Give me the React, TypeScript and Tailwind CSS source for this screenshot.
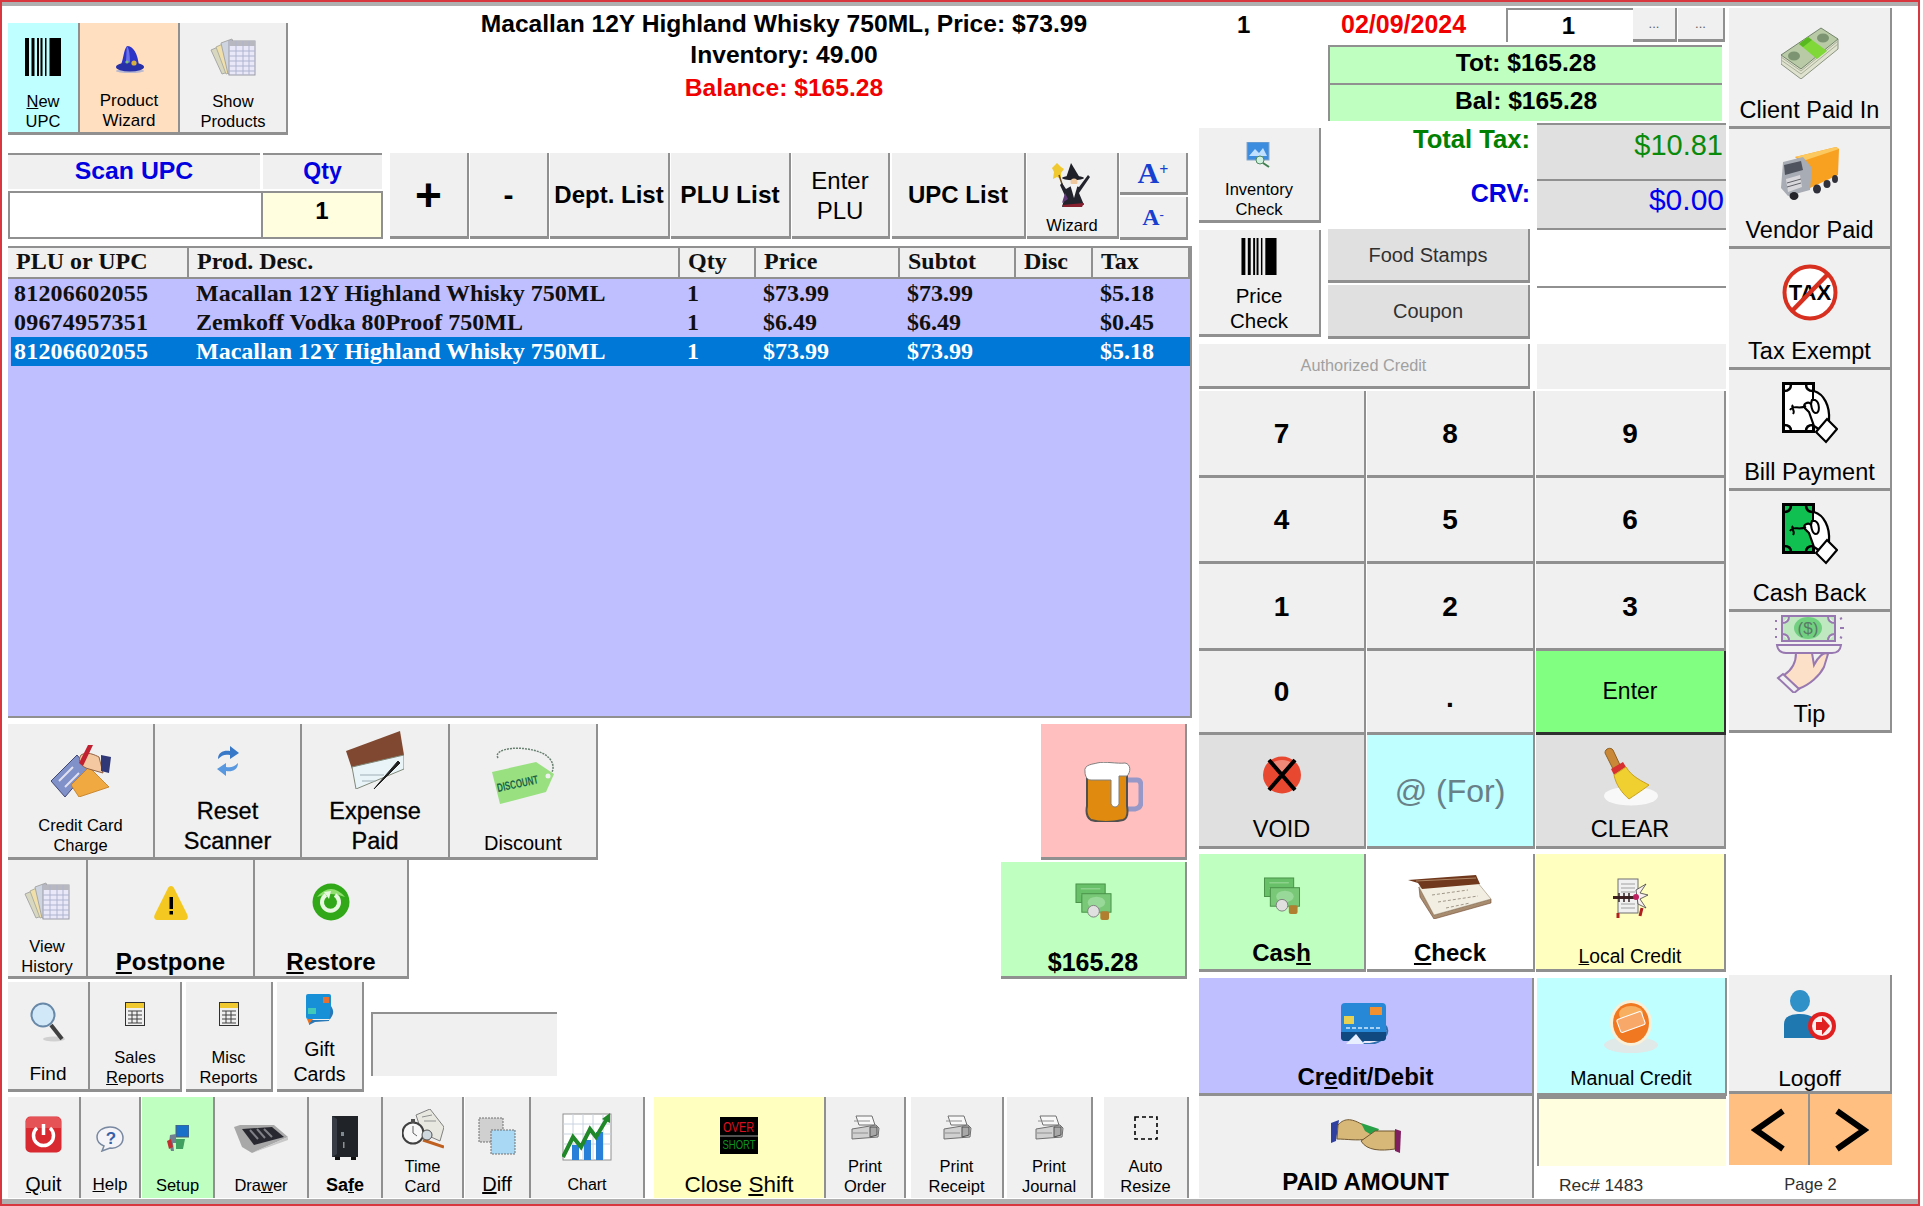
import { FC, ReactNode } from "react";

const Btn: FC<{ className: string; icon?: ReactNode; children?: ReactNode }> = ({ className, icon, children }) => (
  <div className={`flex shrink-0 flex-col items-center justify-between border-r-2 border-b-[3px] border-[#909090] text-center ${className}`}>
    {icon}
    <div>{children}</div>
  </div>
);

const Barcode: FC<{ className: string }> = ({ className }) => (
  <svg viewBox="0 0 36 38" className={className}>
    <g fill="#000">
      <rect x="0" width="4" height="38" />
      <rect x="6.5" width="3" height="38" />
      <rect x="12" width="2" height="38" />
      <rect x="15.5" width="2" height="38" />
      <rect x="20" width="1.5" height="38" />
      <rect x="24.5" width="11.5" height="38" />
    </g>
  </svg>
);

const Sheets: FC<{ className: string }> = ({ className }) => (
  <svg viewBox="0 0 46 38" className={className}>
    <path d="M1 12 L13 7 L24 32 L12 36 Z" fill="#d8d8c0" stroke="#a8a8a8" />
    <path d="M6 9 L17 4 L28 32 L16 36 Z" fill="#f0dfa8" stroke="#b0b0a0" />
    <path d="M11 5 L22 1 L30 33 L18 36 Z" fill="#cfd5e0" stroke="#a8a8a8" />
    <rect x="19" y="3" width="26" height="34" fill="#e8e8f8" stroke="#9a9aa8" />
    <rect x="19" y="3" width="26" height="5" fill="#b8b8c0" />
    <path d="M19 13H45M19 18H45M19 23H45M19 28H45M19 33H45M26 3V37M33 3V37M39 3V37" stroke="#b0b4d0" strokeWidth="1" />
  </svg>
);

const Hat = () => (
  <svg viewBox="0 0 30 28" className="ml-[1px] mt-[22px] h-[28px] w-[30px]">
    <ellipse cx="15" cy="26" rx="14" ry="2" fill="#b8b8d0" />
    <path d="M12 1 C18 1 23 8 24 22 L5 22 C9 14 8 6 12 1 Z" fill="#2c34c8" />
    <path d="M12 1 C15 5 15 14 15 22 L10 22 C12 14 11 6 12 1Z" fill="#6a70e8" />
    <ellipse cx="15" cy="22" rx="14" ry="4.5" fill="#2830a8" />
    <circle cx="19" cy="18" r="2.6" fill="#d8b040" />
    <circle cx="12" cy="17" r="1.6" fill="#78c070" />
  </svg>
);

const WizardMan = () => (
  <svg viewBox="0 0 40 44" className="mt-[10px] h-[44px] w-[40px]">
    <path d="M5 0 L9 4 L12 6 L9 10 L9 16 L5 14 L1 16 L2 9 L0 5 Z" fill="#f0c830" />
    <path d="M7 12 L11 24" stroke="#6a4a20" strokeWidth="1.5" />
    <path d="M19 0 L14 15 L28 15 Z" fill="#202028" />
    <ellipse cx="21" cy="15" rx="11" ry="2.2" fill="#202028" />
    <circle cx="22" cy="19" r="3.5" fill="#f0c8a0" />
    <path d="M21 22 L14 26 L10 20 L8 22 L13 33 L10 44 L32 42 L27 30 L38 14 L36 12 L27 24 Z" fill="#23232d" />
    <path d="M18 21 L26 21 L22 35 Z" fill="#f4f4f4" />
    <path d="M13 30 L10 40 L16 36 Z" fill="#603878" />
    <path d="M10 42 L32 40 L30 44 L12 44 Z" fill="#882030" />
  </svg>
);

const Inventory = () => (
  <svg viewBox="0 0 26 26" className="mt-[14px] h-[26px] w-[26px]">
    <rect x="1" y="0" width="22" height="18" fill="#3c8ce0" stroke="#88a8c8" />
    <path d="M3 14 L9 7 L13 11 L17 6 L21 14 Z" fill="#c0e0ff" />
    <circle cx="14" cy="18" r="4" fill="#d0f0e0" stroke="#508860" />
    <path d="M17 21 L23 25" stroke="#408050" strokeWidth="2" />
  </svg>
);

const Money = () => (
  <svg viewBox="0 0 58 52" className="mt-[19px] h-[52px] w-[58px]">
    <path d="M0 28 L0 37 L20 52 L57 22 L57 12 Z" fill="#dfe2cf" stroke="#8a9482" />
    <path d="M0 30 L20 44 L57 14 M0 33 L20 47 L57 17" fill="none" stroke="#a8b098" strokeWidth="1" />
    <path d="M0 28 L40 1 L57 12 L20 42 Z" fill="#b8cba6" stroke="#74846c" />
    <ellipse cx="13" cy="29" rx="6" ry="4.5" fill="#7d9472" />
    <ellipse cx="42" cy="11" rx="6" ry="4.5" fill="#7d9472" />
    <path d="M18 17 L27 10 L46 24 L36 32 Z" fill="#7fd838" />
    <path d="M27 10 L31 13 L22 20 L18 17 Z" fill="#58b820" />
  </svg>
);

const Truck = () => (
  <svg viewBox="0 0 60 54" className="mt-[17px] h-[54px] w-[60px]">
    <path d="M15 11 L56 1 L59 3 L58 29 L30 42 L27 22 Z" fill="#f8a020" />
    <path d="M15 11 L56 1 L59 3 L26 14 Z" fill="#fcc860" />
    <path d="M3 16 L23 11 L32 22 L30 44 L8 50 L1 42 Z" fill="#a8acb4" />
    <path d="M4 19 L21 15 L23 24 L5 29 Z" fill="#50545f" />
    <path d="M6 33 L20 29 L22 41 L8 46 Z" fill="#d8d8dc" />
    <path d="M7 37 L21 33 M7 41 L21 37" stroke="#606068" />
    <ellipse cx="14" cy="50" rx="4.5" ry="4" fill="#24242a" />
    <ellipse cx="37" cy="43" rx="4" ry="4.5" fill="#30303a" />
    <ellipse cx="47" cy="38" rx="3.5" ry="4" fill="#30303a" />
    <ellipse cx="55" cy="33" rx="3" ry="4" fill="#30303a" />
  </svg>
);

const NoTax = () => (
  <svg viewBox="0 0 56 57" className="mt-[15px] h-[57px] w-[56px]">
    <ellipse cx="28" cy="28.5" rx="25.5" ry="26" fill="#fff" stroke="#d83020" strokeWidth="4" />
    <text x="28" y="36" textAnchor="middle" fontFamily="Liberation Sans" fontWeight="bold" fontSize="22" fill="#000">TAX</text>
    <path d="M46 10 L10 47" stroke="#d83020" strokeWidth="4.5" />
  </svg>
);

const BillHand: FC<{ fill: string; mt: string }> = ({ fill, mt }) => (
  <svg viewBox="0 0 56 62" className={`${mt} h-[62px] w-[56px]`}>
    <rect x="1.5" y="1.5" width="30" height="48" fill={fill} stroke="#000" strokeWidth="3" />
    <path d="M2 9 Q9 9 9 2 M24 2 Q24 9 31 9 M2 43 Q9 43 9 49 M24 49 Q24 43 31 43" stroke="#000" strokeWidth="2.5" fill="none" />
    <path d="M32 9 C42 12 48 24 47 38 L38 48 L32 44 L27 30 L23 26 C20 22 26 19 29 22 L32 25" fill="#fff" stroke="#000" strokeWidth="2.2" />
    <path d="M33 18 C38 20 38 31 34 31 C30 31 28 22 30 18 Z" fill="#fff" stroke="#000" strokeWidth="2" />
    <path d="M45 37 L55 47 L44 60 L34 50 Z" fill="#fff" stroke="#000" strokeWidth="2.2" />
    <path d="M8 28 C12 22 16 28 24 24 M11 23 C8 26 14 28 11 32" stroke="#000" strokeWidth="2" fill="none" />
  </svg>
);

const Tip = () => (
  <svg viewBox="0 0 72 78" className="mt-[3px] h-[78px] w-[72px]">
    <rect x="8" y="1" width="53" height="25" fill="#bfe8c0" stroke="#9878b0" strokeWidth="2" />
    <path d="M8 8 Q15 8 15 1 M54 1 Q54 8 61 8 M8 19 Q15 19 15 26 M54 26 Q54 19 61 19" stroke="#9878b0" strokeWidth="2" fill="#f0f0f0" />
    <ellipse cx="34" cy="13" rx="14" ry="11" fill="#70d080" />
    <text x="34" y="19" textAnchor="middle" fontFamily="Liberation Sans" fontSize="17" fill="#5a7a68">($)</text>
    <path d="M1 6 H3 M1 14 H3 M1 22 H3 M66 4 L68 3 M66 13 H70 M66 22 L68 23" stroke="#9878b0" strokeWidth="2" />
    <path d="M3 30 H67 Q66 38 58 38 H12 Q4 38 3 30 Z" fill="#f0f0f0" stroke="#9878b0" strokeWidth="2" />
    <path d="M22 38 C22 48 18 55 10 60 L24 74 C36 70 46 60 50 52 L54 39 C50 36 44 42 40 50 L38 38 Z" fill="#fce0c8" stroke="#9878b0" strokeWidth="2" />
    <path d="M9 59 L4 63 L20 78 L25 74 Z" fill="#f0f0f0" stroke="#9878b0" strokeWidth="2" />
  </svg>
);

const VoidIcon = () => (
  <svg viewBox="0 0 40 38" className="mt-[21px] h-[38px] w-[40px]">
    <ellipse cx="20" cy="19" rx="19" ry="18.5" fill="#e84830" />
    <path d="M8 8 Q20 0 32 8 L20 16 Z" fill="#f08878" />
    <path d="M7 4 L33 34 M33 4 L7 34" stroke="#000" strokeWidth="4" />
  </svg>
);

const Broom = () => (
  <svg viewBox="0 0 56 60" className="mt-[12px] h-[60px] w-[56px]">
    <ellipse cx="29" cy="49" rx="27" ry="9.5" fill="#f8f8f8" />
    <path d="M3 6 C3 1 9 0 11 3 L18 18 L11 22 Z" fill="#c88838" stroke="#906020" />
    <path d="M9 22 L21 15 L24 20 L12 28 Z" fill="#d83030" />
    <path d="M12 28 L24 20 C30 30 40 34 47 38 C42 42 36 46 27 52 C20 46 14 38 12 28 Z" fill="#f0d030" stroke="#c8a020" />
  </svg>
);

const Cash: FC<{ className: string }> = ({ className }) => (
  <svg viewBox="0 0 38 38" className={className}>
    <rect x="1" y="1" width="30" height="19" fill="#68c068" stroke="#489048" />
    <path d="M6 6 H26 M6 12 H26" stroke="#a0dca0" />
    <rect x="7" y="11" width="30" height="19" fill="#78c878" stroke="#489048" />
    <ellipse cx="22" cy="20" rx="9" ry="6" fill="#98d898" />
    <circle cx="19" cy="29" r="6" fill="#e0e0e0" stroke="#808080" />
    <rect x="26" y="29" width="9" height="9" rx="2" fill="#b08030" />
  </svg>
);

const CheckBook = () => (
  <svg viewBox="0 0 84 44" className="mt-[21px] h-[44px] w-[84px]">
    <path d="M11 12 L12 22 L26 44 L83 28 L83 24 L26 40 Z" fill="#a88c70" stroke="#704830" strokeWidth="0.6" />
    <path d="M11 12 L70 8 L83 24 L26 40 Z" fill="#f2eee2" stroke="#9a8a70" strokeWidth="0.6" />
    <path d="M24 20 L60 15 M30 27 L70 21 M38 33 L62 28" stroke="#a09888" strokeDasharray="3 2" />
    <path d="M0 5 L40 2 L68 0 L72 9 L14 14 L10 8 Z" fill="#70381c" />
    <path d="M8 6 L68 3" stroke="#b08868" />
  </svg>
);

const LocalCredit = () => (
  <svg viewBox="0 0 36 40" className="mt-[24px] h-[40px] w-[36px]">
    <rect x="6" y="1" width="20" height="34" fill="#f0f0f0" stroke="#707070" />
    <path d="M9 6H23M9 10H23M9 14H23M9 26H23M9 30H23" stroke="#a0a0a0" />
    <rect x="1" y="18" width="26" height="3" fill="#402020" />
    <path d="M7 15V24M12 15V24M17 15V24" stroke="#302020" strokeWidth="1.5" />
    <path d="M24 12 L34 6 L28 15 L36 17 L28 21 L34 30 L26 26 Z" fill="#f8f0f0" stroke="#404040" strokeWidth="0.8" />
    <circle cx="24" cy="19" r="3" fill="#c02060" />
    <path d="M6 35 V40 M30 30 L28 38" stroke="#b02020" strokeWidth="3" />
  </svg>
);

const CardIcon = () => (
  <svg viewBox="0 0 52 42" className="mt-[24px] h-[42px] w-[52px]">
    <path d="M44 22 C52 30 44 40 30 42 L20 42 L38 24 Z" fill="#e8e8f8" stroke="#3070b0" strokeWidth="2" />
    <rect x="1" y="1" width="45" height="38" rx="4" fill="#2888d8" />
    <path d="M1 30 H46 V35 Q46 39 42 39 H5 Q1 39 1 35 Z" fill="#104880" />
    <rect x="4" y="14" width="10" height="8" fill="#e8d050" />
    <rect x="30" y="5" width="12" height="8" fill="#f09030" />
    <path d="M6 26 H42" stroke="#a8d0f0" strokeDasharray="4 2" strokeWidth="2" />
    <path d="M6 42 L16 32 L24 42 Z" fill="#e8f0ff" />
  </svg>
);

const ManualCredit = () => (
  <svg viewBox="0 0 56 53" className="mt-[22px] h-[53px] w-[56px]">
    <ellipse cx="28" cy="45" rx="27" ry="8" fill="#e0e8e8" />
    <ellipse cx="28" cy="23" rx="21" ry="23" fill="#f8f0d8" />
    <ellipse cx="28" cy="23" rx="18" ry="20" fill="#f07820" />
    <ellipse cx="28" cy="14" rx="12" ry="8" fill="#f8b060" />
    <rect x="15" y="15" width="26" height="14" rx="2" transform="rotate(-20 28 22)" fill="#f8a868" stroke="#fff" />
  </svg>
);

const Logoff = () => (
  <svg viewBox="0 0 52 50" className="mt-[15px] h-[50px] w-[52px]">
    <ellipse cx="16" cy="11" rx="10" ry="11" fill="#3090c8" />
    <path d="M0 48 L0 34 C0 26 8 24 16 24 C24 24 30 26 32 32 L32 48 Z" fill="#2078b0" />
    <circle cx="38" cy="36" r="14" fill="#e02020" />
    <circle cx="38" cy="36" r="10" fill="#f8f0f0" />
    <path d="M32 32 H38 V27 L46 36 L38 45 V40 H32 Z" fill="#e02020" />
  </svg>
);

const Hands = () => (
  <svg viewBox="0 0 70 36" className="mt-[21px] h-[36px] w-[70px]">
    <path d="M0 6 L8 3 L5 24 L0 26 Z" fill="#3040a0" />
    <path d="M7 8 C14 0 22 2 32 8 L44 16 L36 22 C26 24 16 22 6 22 Z" fill="#d8b878" stroke="#705830" />
    <path d="M30 6 L48 12 L44 20 L34 14 Z" fill="#28a048" />
    <path d="M64 14 L44 14 L30 24 C36 34 50 34 64 32 Z" fill="#d8b878" stroke="#705830" />
    <path d="M64 12 L70 14 L69 36 L64 34 Z" fill="#802060" />
  </svg>
);

const Charge = () => (
  <svg viewBox="0 0 60 52" className="mt-[21px] h-[52px] w-[60px]">
    <path d="M0 36 L26 10 L38 24 L14 52 Z" fill="#8090c8" stroke="#404878" />
    <path d="M8 36 L22 22 M14 42 L28 28" stroke="#e0e0f0" strokeWidth="2" />
    <path d="M20 40 L38 22 L58 42 L28 52 Z" fill="#f0a840" stroke="#c07820" strokeWidth="0.8" />
    <path d="M30 10 C36 6 44 10 48 12 L52 28 L38 24 C30 22 26 16 30 10 Z" fill="#f4c8a0" stroke="#906040" />
    <path d="M42 0 L37 0 L28 18 L32 21 Z" fill="#c02030" />
    <path d="M50 10 L60 12 L58 28 L50 26 Z" fill="#303878" />
  </svg>
);

const Refresh = () => (
  <svg viewBox="0 0 24 30" className="mt-[22px] h-[30px] w-[24px]">
    <path d="M2 13 C2 6 8 4 14 5 L14 0 L23 7 L14 13 L14 9 C9 8 6 9 2 13 Z" fill="#3878c8" />
    <path d="M22 17 C22 24 16 26 10 25 L10 30 L1 23 L10 17 L10 21 C15 22 18 21 22 17 Z" fill="#5898e0" />
  </svg>
);

const ExpenseCheck = () => (
  <svg viewBox="0 0 58 58" className="mt-[7px] h-[58px] w-[58px]">
    <path d="M0 20 L54 0 L58 24 L6 38 Z" fill="#804830" />
    <path d="M6 36 L58 24 L58 38 L10 58 Z" fill="#e8f4f8" stroke="#808878" />
    <path d="M14 44 H38 M16 50 H30" stroke="#a0b0b8" />
    <path d="M54 32 L30 56 L28 58 L33 52 L52 30 Z" fill="#202020" stroke="#202020" />
  </svg>
);

const DiscountTag = () => (
  <svg viewBox="0 0 62 58" className="mt-[22px] h-[58px] w-[62px]">
    <path d="M6 12 C0 2 32 -2 52 8 C62 14 62 22 60 26" fill="none" stroke="#688070" strokeDasharray="2 1" strokeWidth="1.5" />
    <path d="M0 26 L44 16 L62 28 L54 46 L8 58 Z" fill="#98e080" />
    <circle cx="56" cy="30" r="2.5" fill="#f0f0f0" />
    <text transform="translate(6 46) rotate(-12) scale(1 1.5)" fontFamily="Liberation Sans" fontWeight="bold" fontSize="8" fill="#186048">DISCOUNT</text>
  </svg>
);

const Warn = () => (
  <svg viewBox="0 0 36 36" className="mt-[25px] h-[36px] w-[36px]">
    <path d="M18 1 C20 1 21 3 22 5 L34 29 C36 33 34 35 31 35 L5 35 C2 35 0 33 2 29 L14 5 C15 3 16 1 18 1 Z" fill="#f4c820" />
    <rect x="16.5" y="12" width="3.5" height="12" fill="#000" />
    <rect x="16.5" y="26" width="3.5" height="3.5" fill="#000" />
  </svg>
);

const RestoreIcon = () => (
  <svg viewBox="0 0 38 38" className="mt-[23px] h-[38px] w-[38px]">
    <circle cx="19" cy="19" r="18.5" fill="#30a818" />
    <path d="M5 14 Q19 -2 33 14 Q19 8 5 14 Z" fill="#90e070" />
    <path d="M23 12 A8.5 8.5 0 1 1 14 12" fill="none" stroke="#e8f8e0" strokeWidth="4" />
    <path d="M19 8 L12 9 L17 16 Z" fill="#e8f8e0" />
  </svg>
);

const Magnifier = () => (
  <svg viewBox="0 0 36 40" className="mt-[20px] h-[40px] w-[36px]">
    <ellipse cx="24" cy="37" rx="11" ry="2.5" fill="#d0d0d0" />
    <circle cx="13" cy="13" r="11.5" fill="#d0e8f8" stroke="#6888a8" strokeWidth="2" />
    <path d="M21 23 L32 37" stroke="#404040" strokeWidth="4" />
  </svg>
);

const Calc = () => (
  <svg viewBox="0 0 20 24" className="mt-[20px] h-[24px] w-[20px]">
    <rect x="0.5" y="0.5" width="19" height="23" fill="#f0f0f0" stroke="#303030" />
    <rect x="1" y="1" width="18" height="5" fill="#f0c830" />
    <path d="M3 9H17M3 13H17M3 17H17M3 21H17M7 9V21M12 9V21" stroke="#404040" />
  </svg>
);

const Gift = () => (
  <svg viewBox="0 0 30 31" className="mt-[12px] h-[31px] w-[30px]">
    <rect x="1" y="0" width="25" height="25" rx="2" fill="#1890d8" />
    <rect x="18" y="3" width="6" height="6" fill="#e87030" />
    <rect x="3" y="14" width="8" height="6" fill="#40c8b8" />
    <path d="M26 12 C30 18 28 22 24 26 L4 26 L4 31 L10 28 L24 27 Z" fill="#2878b8" />
    <path d="M2 25 L8 25 L4 30 Z" fill="#e87020" />
  </svg>
);

const Power = () => (
  <svg viewBox="0 0 37 37" className="mt-[19px] h-[37px] w-[37px]">
    <rect x="0.5" y="0.5" width="36" height="36" rx="5" fill="#d82830" />
    <path d="M1 6 Q1 1 6 1 H31 Q36 1 36 6 V12 H1Z" fill="#f07070" opacity="0.6" />
    <path d="M12 12 A10 10 0 1 0 25 12" fill="none" stroke="#fff" strokeWidth="3.5" />
    <path d="M18.5 8 V19" stroke="#fff" strokeWidth="3.5" />
  </svg>
);

const Help = () => (
  <svg viewBox="0 0 28 26" className="mt-[29px] h-[26px] w-[28px]">
    <path d="M14 1 C22 1 27 6 27 12 C27 19 20 23 14 22 L6 25 L8 20 C3 18 1 15 1 11 C1 5 7 1 14 1 Z" fill="#f4f4f8" stroke="#7888a0" strokeWidth="1.5" />
    <text x="15" y="18" textAnchor="middle" fontFamily="Liberation Sans" fontWeight="bold" fontSize="17" fill="#3860a8">?</text>
  </svg>
);

const Setup = () => (
  <svg viewBox="0 0 22 26" className="mt-[28px] h-[26px] w-[22px]">
    <rect x="9" y="0" width="13" height="12" fill="#1870c8" stroke="#506070" />
    <path d="M3 10 L9 9 L9 18 L6 18 L7 26 L4 26 L2 18 Z" fill="#708090" />
    <path d="M9 14 L18 14 L16 24 L9 24 Z" fill="#40a060" />
    <path d="M0 16 L4 14 L6 22 L2 24Z" fill="#c03030" />
  </svg>
);

const Drawer = () => (
  <svg viewBox="0 0 54 28" className="mt-[28px] h-[28px] w-[54px]">
    <path d="M0 2 L6 0 L40 0 L54 12 L18 28 L8 22 Z" fill="#a8a8a8" />
    <path d="M8 4 L38 2 L50 12 L20 20 Z" fill="#282830" />
    <path d="M16 5 L24 14 M23 4 L31 13 M30 4 L38 12" stroke="#808088" strokeWidth="2" />
    <path d="M8 22 L18 28 L54 12 L54 15 L18 28 Z" fill="#c8c8c8" />
  </svg>
);

const Safe = () => (
  <svg viewBox="0 0 28 44" className="mt-[19px] h-[44px] w-[28px]">
    <rect x="1" y="0" width="26" height="41" fill="#202428" />
    <rect x="4" y="41" width="5" height="3" fill="#101010" />
    <rect x="20" y="41" width="5" height="3" fill="#101010" />
    <rect x="10" y="16" width="3" height="4" fill="#808890" />
    <path d="M1 0 L6 3 V38 L1 41 Z" fill="#383c44" />
    <rect x="12" y="26" width="1.5" height="6" fill="#909090" />
  </svg>
);

const TimeCard = () => (
  <svg viewBox="0 0 42 40" className="mt-[12px] h-[40px] w-[42px]">
    <path d="M14 6 L28 0 L42 18 L38 32 L20 24 Z" fill="#e8e8e0" stroke="#808080" />
    <path d="M20 8 L30 6 M22 12 L34 12" stroke="#909090" />
    <circle cx="11" cy="24" r="10.5" fill="#f8f8f8" stroke="#404040" strokeWidth="2" />
    <rect x="9" y="10" width="4" height="4" fill="#505050" />
    <path d="M11 17 V24 L15 27" stroke="#606060" fill="none" />
    <path d="M21 31 L42 38" stroke="#c06020" strokeWidth="3" />
    <circle cx="25" cy="26" r="5" fill="#d0d8e0" stroke="#505050" />
  </svg>
);

const Diff = () => (
  <svg viewBox="0 0 38 38" className="mt-[20px] h-[38px] w-[38px]">
    <rect x="1" y="1" width="24" height="24" fill="#d0d0d0" stroke="#707070" strokeDasharray="2 1" />
    <rect x="13" y="13" width="24" height="24" fill="#a8d8f4" stroke="#707070" strokeDasharray="2 1" />
  </svg>
);

const Chart = () => (
  <svg viewBox="0 0 50 48" className="mt-[16px] h-[48px] w-[50px]">
    <rect x="1" y="1" width="48" height="46" fill="#fff" stroke="#909090" />
    <path d="M1 11H49M1 21H49M1 31H49M11 1V47M21 1V47M31 1V47M41 1V47" stroke="#c8d4e0" />
    <rect x="10" y="32" width="7" height="15" fill="#2880d8" />
    <rect x="22" y="27" width="7" height="20" fill="#2880d8" />
    <rect x="34" y="19" width="7" height="28" fill="#2880d8" />
    <path d="M1 44 L11 24 L19 34 L28 16 L34 24 L46 4" fill="none" stroke="#208828" strokeWidth="4" />
    <path d="M48 0 L40 6 L48 10 Z" fill="#208828" />
  </svg>
);

const OverShort = () => (
  <svg viewBox="0 0 38 37" className="mt-[20px] h-[37px] w-[38px]">
    <rect width="38" height="37" fill="#000" />
    <rect y="18" width="38" height="2" fill="#505050" />
    <text transform="translate(3 15) scale(1 1.4)" fontFamily="Liberation Sans" fontSize="11" fill="#d81020">OVER</text>
    <text transform="translate(2.5 32) scale(1 1.4)" fontFamily="Liberation Sans" fontSize="9.5" fill="#109020">SHORT</text>
  </svg>
);

const Printer = () => (
  <svg viewBox="0 0 30 25" className="mt-[18px] h-[25px] w-[30px]">
    <path d="M6 1 H22 L25 10 H9 Z" fill="#f8f8f8" stroke="#707070" />
    <path d="M4 6 H20" stroke="#909090" />
    <path d="M2 14 L26 10 L29 13 L28 22 L2 24 Z" fill="#d0d0d0" stroke="#707070" />
    <path d="M20 12 H27 V20 L20 22 Z" fill="#a8a8a8" stroke="#505050" />
    <path d="M3 18 H18" stroke="#909090" />
  </svg>
);

const Dashed = () => (
  <svg viewBox="0 0 24 24" className="mt-[19px] h-[24px] w-[24px]">
    <rect x="1" y="1" width="22" height="22" fill="none" stroke="#000" strokeWidth="1.6" strokeDasharray="4 3" />
  </svg>
);

const Beer = () => (
  <svg viewBox="0 0 60 60" className="mt-[38px] h-[60px] w-[60px]">
    <path d="M42 18 H54 Q58 18 58 24 V40 Q58 46 52 47 H42" fill="none" stroke="#9898c8" strokeWidth="5" />
    <path d="M4 12 H44 L44 44 Q46 56 40 58 Q22 62 8 58 Q2 54 4 44 Z" fill="#e08a10" stroke="#505050" strokeWidth="2" />
    <path d="M2 10 C0 2 12 2 14 1 C22 -1 34 2 42 1 C48 2 48 10 44 14 L36 14 L36 42 C34 46 30 46 28 42 L28 18 L8 18 C4 18 2 14 2 10 Z" fill="#fff" stroke="#808080" />
  </svg>
);

const rows = [
  ["81206602055", "Macallan 12Y Highland Whisky 750ML", "1", "$73.99", "$73.99", "", "$5.18"],
  ["09674957351", "Zemkoff Vodka 80Proof 750ML", "1", "$6.49", "$6.49", "", "$0.45"],
  ["81206602055", "Macallan 12Y Highland Whisky 750ML", "1", "$73.99", "$73.99", "", "$5.18"],
];

const cols = ["w-[181px]", "w-[491px]", "w-[76px]", "w-[144px]", "w-[116px]", "w-[77px]", "flex-1"];
const heads = ["PLU or UPC", "Prod. Desc.", "Qty", "Price", "Subtot", "Disc", "Tax"];

const App = () => {
  const gray = "bg-[#f0f0f0]";
  const keyText = "text-[28px] font-bold leading-none";
  const small = "text-[16.5px] leading-[20px]";
  const big = "text-[23.5px] leading-[26px]";
  const bold24 = "text-[24px] font-bold leading-[28px]";

  return (
    <div className="h-[1206px] w-[1920px] overflow-hidden border-2 border-[#d8373f] bg-white font-['Liberation_Sans',sans-serif] text-black">
      <div className="flex h-full border-t-4 border-b-[5px] border-[#b0b0b0] pl-[6px]">
        {/* left column */}
        <div className="flex w-[1184px] shrink-0 flex-col">
          <div className="flex h-[147px]">
            <div className="mt-[17px] flex h-[112px]">
              <Btn className={`w-[72px] bg-[#bfffff] pb-[1px] ${small}`} icon={<Barcode className="mt-[15px] h-[38px] w-[36px]" />}>
                <u>N</u>ew<br />UPC
              </Btn>
              <Btn className={`w-[100px] bg-[#ffdfbf] pb-[1px] text-[17px] leading-[20px]`} icon={<Hat />}>Product<br />Wizard</Btn>
              <Btn className={`w-[108px] ${gray} pb-[1px] ${small}`} icon={<Sheets className="mt-[15px] h-[38px] w-[46px]" />}>Show<br />Products</Btn>
            </div>
            <div className="flex flex-1 flex-col items-center pl-[88px] pt-[2px] text-[24.6px] font-bold">
              <div className="h-[31px] leading-[31px] whitespace-nowrap">Macallan 12Y Highland Whisky 750ML, Price: $73.99</div>
              <div className="h-[31px] leading-[31px]">Inventory: 49.00</div>
              <div className="h-[34px] leading-[36px] text-[#f00000]">Balance: $165.28</div>
            </div>
          </div>

          <div className="flex h-[87px]">
            <div className="flex w-[375px] shrink-0 flex-wrap content-start">
              <div className="flex h-[36px] w-[252px] items-center justify-center border-t-2 border-[#909090] bg-[#f0f0f0] pb-[2px] text-[24.8px] font-bold text-[#0000e0]">Scan UPC</div>
              <div className="ml-[3px] flex h-[36px] w-[119px] items-center justify-center border-t-2 border-[#909090] bg-[#f0f0f0] pb-[2px] text-[23px] font-bold text-[#0000e0]">Qty</div>
              <div className="mt-[2px] h-[48px] w-[255px] border-2 border-[#909090] bg-white" />
              <div className="mt-[2px] flex h-[48px] w-[120px] items-center justify-center border-y-2 border-r-2 border-[#909090] bg-[#ffffe0] pb-[8px] text-[24px] font-bold">1</div>
            </div>
            <div className="ml-[7px] flex h-[86px]">
              <Btn className={`w-[79px] ${gray} justify-center! text-[46px] font-bold leading-none`}>+</Btn>
              <Btn className={`ml-[1px] w-[79px] ${gray} justify-center! text-[30px] font-bold leading-none`}>-</Btn>
              <Btn className={`ml-[1px] w-[120px] ${gray} justify-center! pt-[1px] text-[24px] font-bold`}>Dept. List</Btn>
              <Btn className={`ml-[1px] w-[120px] ${gray} justify-center! pt-[1px] text-[24.5px] font-bold`}>PLU List</Btn>
              <Btn className={`ml-[1px] w-[98px] ${gray} justify-center! pt-[3px] text-[24px] leading-[30px]`}>Enter<br />PLU</Btn>
              <Btn className={`ml-[2px] w-[134px] ${gray} justify-center! pt-[1px] text-[24px] font-bold`}>UPC List</Btn>
              <Btn className={`ml-[1px] w-[92px] ${gray} pb-[1px] ${small}`} icon={<WizardMan />}>Wizard</Btn>
              <div className="ml-[1px] flex w-[68px] flex-col gap-[2px]">
                <Btn className={`h-[42px] ${gray} justify-center! font-['Liberation_Serif',serif] text-[30px] font-bold leading-none text-[#1840d0]`}>
                  <span>A<sup className="text-[16px]">+</sup></span>
                </Btn>
                <Btn className={`h-[43px] ${gray} justify-center! font-['Liberation_Serif',serif] text-[24px] font-bold leading-none text-[#1840d0]`}>
                  <span>A<sup className="text-[13px]">-</sup></span>
                </Btn>
              </div>
            </div>
          </div>

          <div className="mt-[6px] flex h-[472px] flex-col border-r-2 border-b-2 border-[#909090] bg-[#bfbfff] font-['Liberation_Serif',serif] text-[24px] font-bold">
            <div className="flex h-[33px] shrink-0 border-t-2 border-b-2 border-[#909090] bg-[#f0f0f0]">
              {heads.map((h, i) => (
                <div key={h} className={`${cols[i]} border-r-2 border-[#909090] pl-[8px] leading-[27px] text-[#101010]`}>{h}</div>
              ))}
            </div>
            <div className="pl-[3px]">
              {rows.map((row, r) => (
                <div key={r} className={`flex h-[29px] leading-[29px] ${r === 2 ? "bg-[#0078d7] text-white" : "text-[#101010]"}`}>
                  {row.map((c, i) => (
                    <div key={i} className={`${i === 0 ? "w-[178px] pl-[3px] tracking-[0.2px]" : `${cols[i]} pl-[7px]`} whitespace-nowrap`}>{c}</div>
                  ))}
                </div>
              ))}
            </div>
          </div>

          <div className="mt-[6px] flex h-[136px] justify-between pr-[5px]">
            <div className="flex">
              <Btn className={`w-[147px] ${gray} pb-[2px] ${small}`} icon={<Charge />}>Credit Card<br />Charge</Btn>
              <Btn className={`w-[147px] ${gray} pb-[1px] text-[23.5px] leading-[30px] [-webkit-text-stroke:0.3px]`} icon={<Refresh />}>Reset<br />Scanner</Btn>
              <Btn className={`w-[148px] ${gray} pb-[1px] text-[23.5px] leading-[30px] [-webkit-text-stroke:0.3px]`} icon={<ExpenseCheck />}>Expense<br />Paid</Btn>
              <Btn className={`w-[148px] ${gray} pb-[2px] text-[20px] leading-[24px]`} icon={<DiscountTag />}>Discount</Btn>
            </div>
            <div className="w-[146px] border-r-2 border-b-[3px] border-[#909090] bg-[#ffbfbf]">
              <div className="flex justify-center"><Beer /></div>
            </div>
          </div>

          <div className="flex h-[119px] justify-between pr-[5px]">
            <div className="flex">
              <Btn className={`w-[80px] ${gray} ${small}`} icon={<Sheets className="mt-[22px] h-[38px] w-[46px]" />}>View<br />History</Btn>
              <Btn className={`w-[167px] ${gray} ${bold24}`} icon={<Warn />}><u>P</u>ostpone</Btn>
              <Btn className={`w-[154px] ${gray} ${bold24}`} icon={<RestoreIcon />}><u>R</u>estore</Btn>
            </div>
            <Btn className={`mt-[2px] w-[186px] bg-[#bfffbf] text-[25px] font-bold leading-[28px]`} icon={<Cash className="mt-[21px] h-[37px] w-[37px]" />}>$165.28</Btn>
          </div>

          <div className="mt-[3px] flex h-[110px]">
            <Btn className={`w-[82px] ${gray} pb-[3px] text-[19px] leading-[24px]`} icon={<Magnifier />}>Find</Btn>
            <Btn className={`w-[92px] ${gray} pb-[2px] ${small}`} icon={<Calc />}>Sales<br /><u>R</u>eports</Btn>
            <Btn className={`ml-[4px] w-[87px] ${gray} pb-[2px] ${small}`} icon={<Calc />}>Misc<br />Reports</Btn>
            <Btn className={`ml-[4px] w-[87px] ${gray} pb-[2px] text-[19.5px] leading-[25px]`} icon={<Gift />}>Gift<br />Cards</Btn>
            <div className="ml-[7px] mt-[30px] h-[64px] w-[186px] border-t-2 border-l-2 border-[#909090] bg-[#f0f0f0]" />
          </div>

          <div className="mt-[5px] flex h-[101px]">
            <Btn className={`w-[73px] ${gray} pb-[2px] text-[19.5px] leading-[24px] border-b-0!`} icon={<Power />}><u>Q</u>uit</Btn>
            <Btn className={`w-[60px] ${gray} pb-[2px] text-[17px] leading-[22px] border-b-0!`} icon={<Help />}><u>H</u>elp</Btn>
            <Btn className={`ml-[1px] w-[73px] bg-[#bfffbf] pb-[2px] text-[16.5px] leading-[22px] border-b-0!`} icon={<Setup />}>Setup</Btn>
            <Btn className={`w-[94px] ${gray} pb-[2px] text-[16.5px] leading-[22px] border-b-0!`} icon={<Drawer />}>Dra<u>w</u>er</Btn>
            <Btn className={`w-[74px] ${gray} pb-[2px] text-[18px] font-bold leading-[22px] border-b-0!`} icon={<Safe />}>Sa<u>f</u>e</Btn>
            <Btn className={`w-[81px] ${gray} pb-[2px] ${small} border-b-0!`} icon={<TimeCard />}>Time<br />Card</Btn>
            <Btn className={`ml-[1px] w-[66px] ${gray} pb-[2px] text-[20px] leading-[24px] border-b-0!`} icon={<Diff />}><u>D</u>iff</Btn>
            <Btn className={`w-[114px] ${gray} pb-[2px] text-[16px] leading-[22px] border-b-0!`} icon={<Chart />}>Chart</Btn>
            <Btn className={`ml-[9px] w-[172px] bg-[#ffffbf] text-[22.5px] leading-[26px] border-b-0!`} icon={<OverShort />}>Close <u>S</u>hift</Btn>
            <Btn className={`w-[80px] ${gray} pb-[2px] ${small} border-b-0!`} icon={<Printer />}>Print<br />Order</Btn>
            <Btn className={`ml-[5px] w-[93px] ${gray} pb-[2px] ${small} border-b-0!`} icon={<Printer />}>Print<br />Receipt</Btn>
            <Btn className={`ml-[3px] w-[86px] ${gray} pb-[2px] ${small} border-b-0!`} icon={<Printer />}>Print<br />Journal</Btn>
            <Btn className={`ml-[11px] w-[85px] ${gray} pb-[2px] ${small} border-b-0!`} icon={<Dashed />}>Auto<br />Resize</Btn>
          </div>
        </div>

        {/* middle column */}
        <div className="ml-[7px] flex w-[527px] shrink-0 flex-col">
          <div className="mt-[2px] flex h-[34px] items-center text-[24px] font-bold">
            <div className="ml-[38px] w-[104px]">1</div>
            <div className="w-[165px] text-[25px] text-[#f00000]">02/09/2024</div>
            <div className="flex h-full w-[127px] items-center justify-center border-t-2 border-l-2 border-[#909090] bg-white pr-[4px]">1</div>
            <Btn className={`h-full w-[44px] ${gray} justify-center! text-[13px] font-normal text-[#606060]`}>...</Btn>
            <Btn className={`ml-[1px] h-full w-[47px] ${gray} justify-center! text-[13px] font-normal text-[#606060]`}>...</Btn>
          </div>
          <div className="ml-[129px] mt-[3px] flex h-[38px] w-[394px] items-center justify-center border-t-2 border-l-2 border-[#909090] bg-[#bfffbf] pb-[4px] text-[24.6px] font-bold">Tot: $165.28</div>
          <div className="ml-[129px] flex h-[38px] w-[394px] items-center justify-center border-t-2 border-l-2 border-[#909090] bg-[#bfffbf] pb-[4px] text-[24.6px] font-bold">Bal: $165.28</div>

          <div className="mt-[2px] flex h-[216px]">
            <div className="flex w-[129px] flex-col pt-[5px]">
              <Btn className={`h-[95px] w-[122px] ${gray} pb-[1px] ${small}`} icon={<Inventory />}>Inventory<br />Check</Btn>
              <Btn className={`mt-[7px] h-[107px] w-[122px] ${gray} pb-[1px] text-[20.5px] leading-[25px]`} icon={<Barcode className="mt-[8px] h-[37px] w-[36px]" />}>Price<br />Check</Btn>
            </div>
            <div className="flex w-[209px] flex-col">
              <div className="flex h-[55px] justify-end pr-[7px] pt-[1px] text-[25.6px] font-bold leading-[30px] text-[#008000]">Total Tax:</div>
              <div className="flex h-[51px] justify-end pr-[7px] text-[25px] font-bold leading-[30px] text-[#0000e0]">CRV:</div>
              <Btn className="h-[54px] w-[202px] justify-center! bg-[#e0e0e0] text-[20px] text-[#303030]">Food Stamps</Btn>
              <Btn className="mt-[2px] h-[54px] w-[202px] justify-center! bg-[#e0e0e0] text-[20px] text-[#303030]">Coupon</Btn>
            </div>
            <div className="flex w-[189px] flex-col">
              <div className="flex h-[56px] items-start justify-end border-t-2 border-[#909090] bg-[#e0e0e0] pr-[3px] text-[29px] leading-[40px] text-[#0a8a0a]">$10.81</div>
              <div className="flex h-[51px] items-start justify-end border-y-2 border-[#909090] bg-[#e0e0e0] pr-[2px] text-[30px] leading-[38px] text-[#0000f0]">$0.00</div>
              <div className="h-[52px] bg-white" />
              <div className="mt-[4px] h-[52px] border-t-2 border-[#909090] bg-white" />
            </div>
          </div>

          <div className="mt-[5px] flex h-[45px]">
            <Btn className={`w-[331px] ${gray} justify-center! text-[16.3px] text-[#a0a0a0]`}>Authorized Credit</Btn>
            <div className={`ml-[7px] w-[189px] ${gray}`} />
          </div>

          <div className="mt-[2px] grid h-[344px] grid-cols-[167px_168px_190px] grid-rows-[87px_86px_87px_84px] gap-x-[1px]">
            {["7", "8", "9", "4", "5", "6", "1", "2", "3", "0"].map((k) => (
              <Btn key={k} className={`${gray} justify-center! pt-[1px] ${keyText}`}>{k}</Btn>
            ))}
            <Btn className={`${gray} justify-center! pt-[13px] ${keyText}`}>.</Btn>
            <div className="flex items-center justify-center border-r-2 border-b-[3px] border-[#303030] bg-[#80ff80] text-[23px]">Enter</div>
          </div>

          <div className="grid h-[114px] grid-cols-[167px_168px_190px] gap-x-[1px]">
            <Btn className={`bg-[#e0e0e0] pb-[4px] ${big}`} icon={<VoidIcon />}>VOID</Btn>
            <Btn className="justify-center! bg-[#bfffff] text-[32px] text-[#688088]">@ (For)</Btn>
            <Btn className={`bg-[#e0e0e0] pb-[4px] ${big}`} icon={<Broom />}>CLEAR</Btn>
          </div>

          <div className="mt-[5px] grid h-[118px] grid-cols-[167px_168px_190px] gap-x-[1px]">
            <Btn className={`bg-[#bfffbf] pb-[2px] ${bold24}`} icon={<Cash className="mt-[23px] h-[37px] w-[38px]" />}>Cas<u>h</u></Btn>
            <Btn className={`bg-white pb-[2px] ${bold24}`} icon={<CheckBook />}><u>C</u>heck</Btn>
            <Btn className="bg-[#ffffbf] text-[19.3px] leading-[24px]" icon={<LocalCredit />}><u>L</u>ocal Credit</Btn>
          </div>

          <div className="mt-[6px] flex h-[118px]">
            <Btn className={`w-[335px] bg-[#bfbfff] pb-[2px] ${bold24}`} icon={<CardIcon />}>Cr<u>e</u>dit/Debit</Btn>
            <Btn className="ml-[3px] w-[190px] bg-[#bfffff] pb-[3px] text-[19.5px] leading-[24px]" icon={<ManualCredit />}>Manual Credit</Btn>
          </div>

          <div className="flex h-[102px]">
            <Btn className={`w-[335px] ${gray} border-b-0! pb-[2px] ${bold24}`} icon={<Hands />}>PAID AMOUNT</Btn>
            <div className="ml-[3px] flex w-[190px] flex-col">
              <div className="h-[70px] border-t-[3px] border-l-2 border-[#909090] bg-[#ffffe0]" />
              <div className="mt-[8px] pl-[22px] text-[17.4px] leading-[22px] text-[#303030]">Rec# 1483</div>
            </div>
          </div>
        </div>

        {/* right column */}
        <div className="ml-[3px] flex w-[163px] shrink-0 flex-col pt-[2px]">
          <Btn className={`h-[121px] ${gray} pb-[3px] ${big}`} icon={<Money />}>Client Paid In</Btn>
          <Btn className={`h-[120px] ${gray} pb-[3px] ${big}`} icon={<Truck />}>Vendor Paid</Btn>
          <Btn className={`h-[121px] ${gray} pb-[3px] ${big}`} icon={<NoTax />}>Tax Exempt</Btn>
          <Btn className={`h-[121px] ${gray} pb-[3px] ${big}`} icon={<BillHand fill="#ffffff" mt="mt-[12px]" />}>Bill Payment</Btn>
          <Btn className={`h-[121px] ${gray} pb-[3px] ${big}`} icon={<BillHand fill="#10c050" mt="mt-[12px]" />}>Cash Back</Btn>
          <Btn className={`h-[121px] ${gray} pb-[3px] ${big}`} icon={<Tip />}>Tip</Btn>
          <Btn className={`mt-[242px] h-[119px] ${gray} text-[22.7px] leading-[26px]`} icon={<Logoff />}>Logoff</Btn>
          <div className="flex h-[71px]">
            <div className="flex w-[81px] items-center justify-center border-r-2 border-[#909090] bg-[#ffbf80]">
              <svg viewBox="0 0 36 46" className="h-[46px] w-[36px]"><path d="M32 4 L5 23 L32 42" fill="none" stroke="#000" strokeWidth="6" /></svg>
            </div>
            <div className="flex w-[82px] items-center justify-center bg-[#ffbf80]">
              <svg viewBox="0 0 36 46" className="h-[46px] w-[36px]"><path d="M4 4 L31 23 L4 42" fill="none" stroke="#000" strokeWidth="6" /></svg>
            </div>
          </div>
          <div className="mt-[8px] text-center text-[16.5px] leading-[22px] text-[#303030]">Page 2</div>
        </div>
      </div>
    </div>
  );
};

export default App;
